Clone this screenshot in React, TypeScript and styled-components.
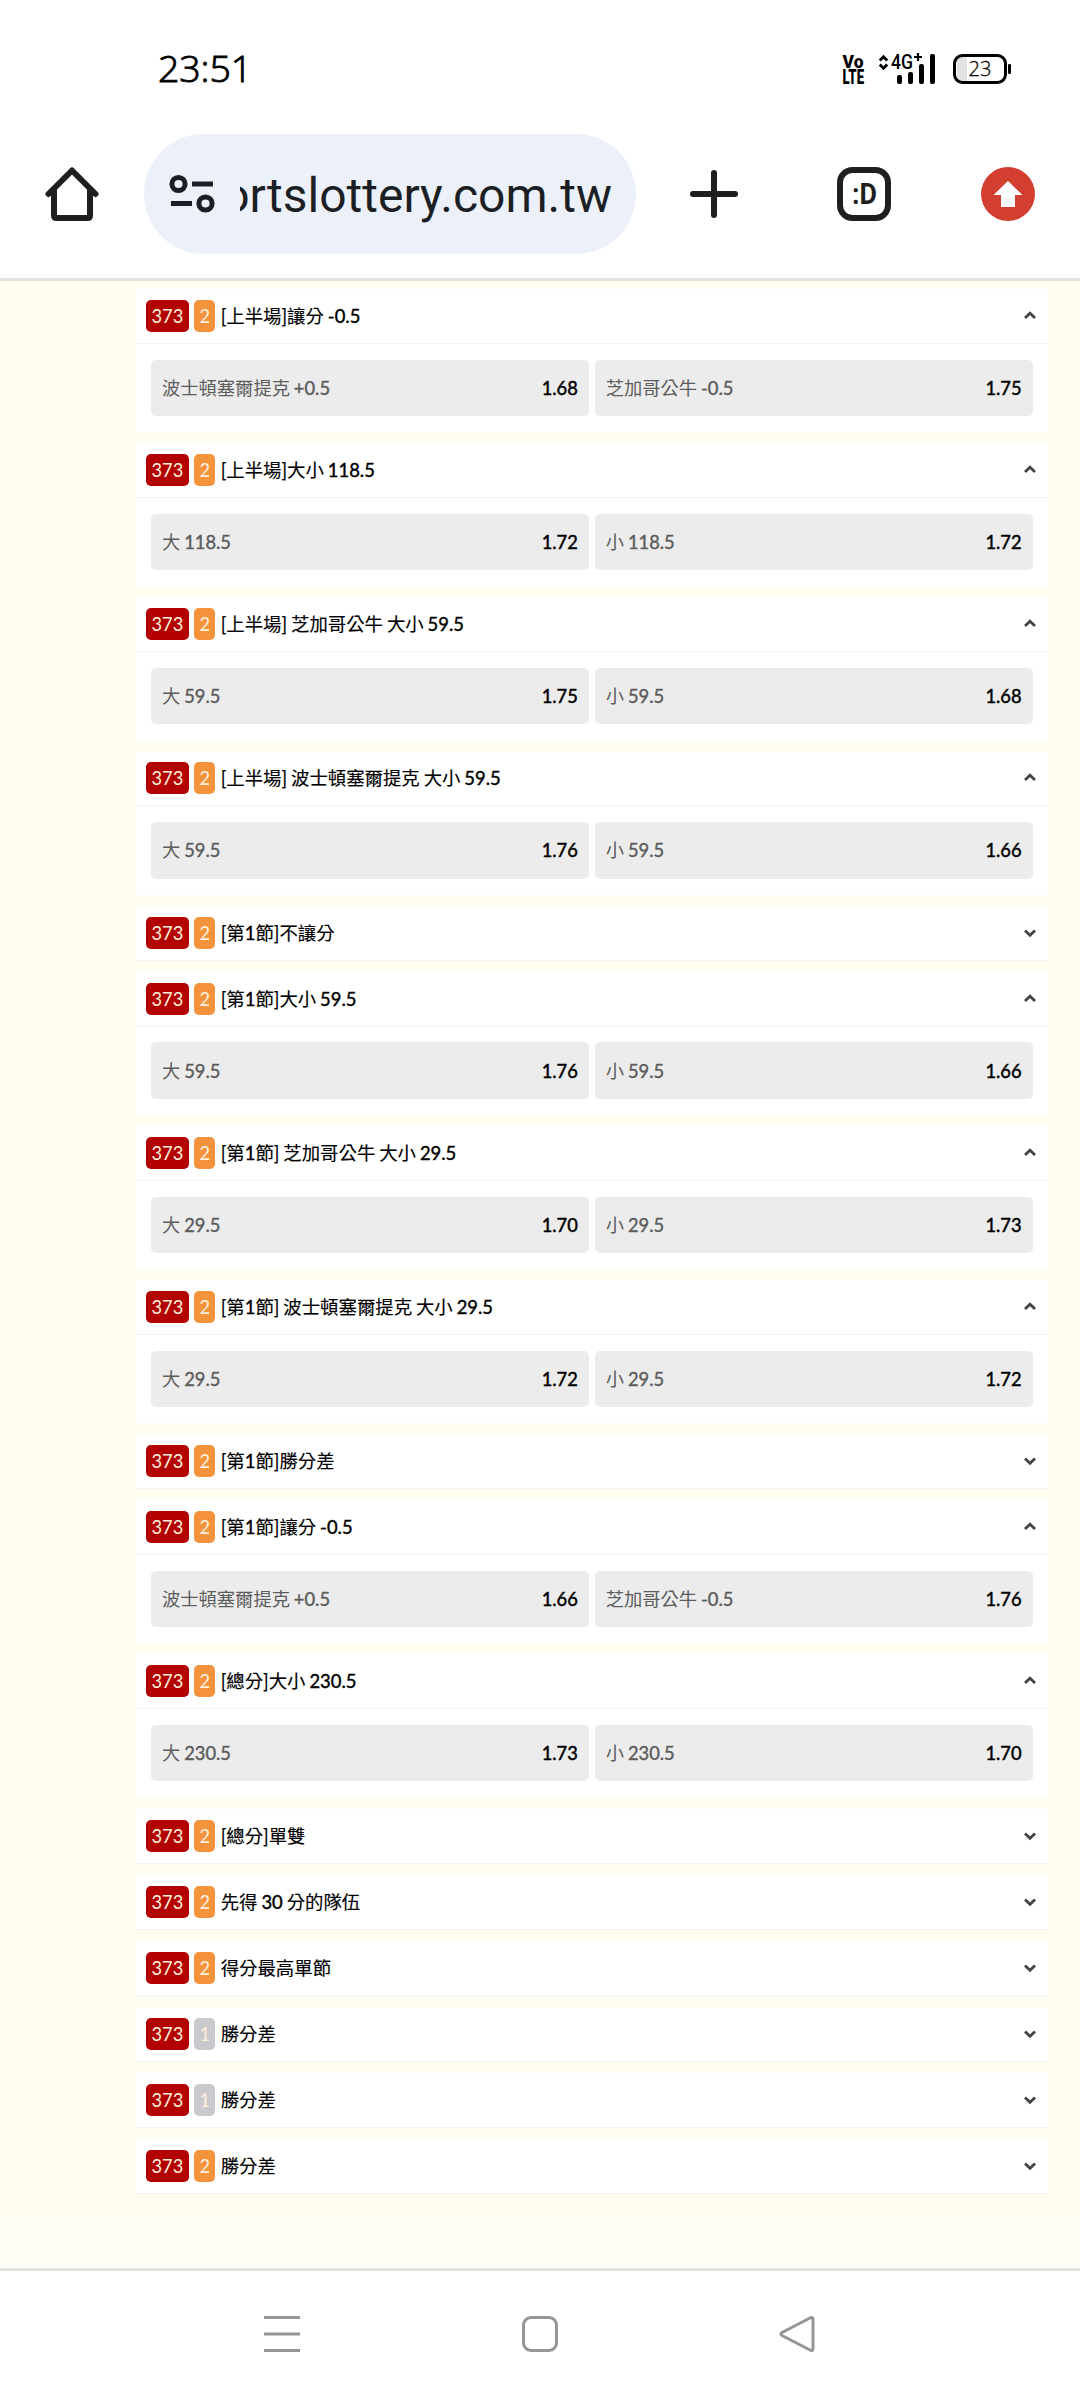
import React from "react";
import styled, { createGlobalStyle } from "styled-components";

const Global = createGlobalStyle`
  * { box-sizing: border-box; }
  html, body { margin: 0; padding: 0; background: #fff; }
`;

const Screen = styled.div`
  width: 1080px;
  height: 2400px;
  display: flex;
  flex-direction: column;
  background: #fff;
  overflow: hidden;
  font-family: Lato, "Noto Sans CJK TC", sans-serif;
`;

const StatusBar = styled.div`
  height: 134px;
  display: flex;
  align-items: flex-start;
  justify-content: space-between;
  padding: 41px 68px 0 158px;
`;

const Clock = styled.div`
  font: 300 37.5px/54px "Open Sans", "Noto Sans", sans-serif;
  letter-spacing: -0.1px;
  color: #000;
  -webkit-text-stroke: 0.9px #000;
`;

const StatusIcons = styled.div`
  display: flex;
  padding-top: 9px;
`;

const Toolbar = styled.div`
  height: 147px;
  flex: none;
  display: flex;
  align-items: flex-start;
  padding-left: 45px;
  border-bottom: 3px solid #e1e2dc;
`;

const ToolIcon = styled.div<{ $gap: number }>`
  flex: none;
  width: 54px;
  height: 120px;
  margin-left: ${(p) => p.$gap}px;
  display: flex;
  align-items: center;
  justify-content: center;
`;

const AddressBar = styled.div`
  flex: none;
  width: 492px;
  height: 120px;
  margin-left: 45px;
  border-radius: 60px;
  background: #ecf0f9;
  display: flex;
  align-items: center;
  padding: 0 24px 0 25px;
`;

const Url = styled.div`
  width: 372px;
  margin-left: 25px;
  overflow: hidden;
  display: flex;
  justify-content: flex-end;
  white-space: nowrap;
  font: 400 48px/64px Roboto, sans-serif;
  color: #1b1f23;
  padding-top: 4px;
`;

const Page = styled.main`
  flex: none;
  height: 1935px;
  padding: 8px 32px 0 136px;
  background: #fffdf0;
  display: flex;
  flex-direction: column;
  gap: 11.07px;
`;

const Footer = styled.div`
  flex: none;
  height: 55px;
  background: #fffdf5;
  border-bottom: 3px solid #e1e2dc;
`;

const Card = styled.section`
  flex: none;
  background: #fff;
`;

const CardHeader = styled.header`
  height: 55px;
  display: flex;
  align-items: center;
  padding: 0 12px 0 10px;
  border-bottom: 1.5px solid #f3f4f5;
`;

const Badge = styled.span<{ $color: string; $width: number }>`
  width: ${(p) => p.$width}px;
  height: 32px;
  margin-right: 5.5px;
  border-radius: 5px;
  background: ${(p) => p.$color};
  color: #fff0dc;
  font-size: 18.3px;
  line-height: 32px;
  text-align: center;
`;

const Title = styled.h2`
  flex: 1;
  margin: 0;
  font-size: 18.4px;
  line-height: 32px;
  font-weight: 400;
  color: #000;
  word-spacing: -0.8px;
  -webkit-text-stroke: 0.15px #000;
`;

const Figures = styled.span`
  -webkit-text-stroke: 0.4px currentColor;
`;

const Options = styled.div`
  height: 88.1px;
  display: grid;
  grid-template-columns: 1fr 1fr;
  gap: 6px;
  padding: 15.7px 15.5px 16px 15px;
`;

const Option = styled.div`
  display: flex;
  align-items: center;
  justify-content: space-between;
  padding: 0 11px;
  border-radius: 5px;
  background: #ececec;
  font-size: 18.3px;
  line-height: 32px;
`;

const OptionName = styled.span`
  color: #5c5c5c;
  word-spacing: -0.8px;
`;

const Odds = styled.span`
  color: #000;
  -webkit-text-stroke: 0.45px #000;
`;

const NavBar = styled.nav`
  flex: none;
  height: 129px;
  display: flex;
  justify-content: center;
  padding-top: 42px;
  gap: 216px;
`;

type Pick = [string, string];
interface Market {
  title: string;
  legs?: 1 | 2;
  picks?: [Pick, Pick];
}

const overUnder = (line: string, over: string, under: string): [Pick, Pick] => [
  [`大 ${line}`, over],
  [`小 ${line}`, under],
];

const handicap = (home: string, away: string): [Pick, Pick] => [
  ["波士頓塞爾提克 +0.5", home],
  ["芝加哥公牛 -0.5", away],
];

const markets: Market[] = [
  { title: "[上半場]讓分 -0.5", picks: handicap("1.68", "1.75") },
  { title: "[上半場]大小 118.5", picks: overUnder("118.5", "1.72", "1.72") },
  { title: "[上半場] 芝加哥公牛 大小 59.5", picks: overUnder("59.5", "1.75", "1.68") },
  { title: "[上半場] 波士頓塞爾提克 大小 59.5", picks: overUnder("59.5", "1.76", "1.66") },
  { title: "[第1節]不讓分" },
  { title: "[第1節]大小 59.5", picks: overUnder("59.5", "1.76", "1.66") },
  { title: "[第1節] 芝加哥公牛 大小 29.5", picks: overUnder("29.5", "1.70", "1.73") },
  { title: "[第1節] 波士頓塞爾提克 大小 29.5", picks: overUnder("29.5", "1.72", "1.72") },
  { title: "[第1節]勝分差" },
  { title: "[第1節]讓分 -0.5", picks: handicap("1.66", "1.76") },
  { title: "[總分]大小 230.5", picks: overUnder("230.5", "1.73", "1.70") },
  { title: "[總分]單雙" },
  { title: "先得 30 分的隊伍" },
  { title: "得分最高單節" },
  { title: "勝分差", legs: 1 },
  { title: "勝分差", legs: 1 },
  { title: "勝分差" },
];

// Figures are set a little stronger than the Chinese text around them.
const Label = ({ text }: { text: string }) => (
  <>
    {text.split(/([-+]?[\d.]+)/).map((part, i) =>
      i % 2 ? <Figures key={i}>{part}</Figures> : part
    )}
  </>
);

function Chevron({ open }: { open: boolean }) {
  return (
    <svg width="12" height="10" viewBox="0 0 12 10" fill="none" stroke="#444" strokeWidth="2.8">
      <path d={open ? "M1 7.100 6 2.300l5 4.800" : "M1 2.400 6 7.200l5-4.800"} />
    </svg>
  );
}

function MarketCard({ title, legs = 2, picks }: Market) {
  return (
    <Card>
      <CardHeader>
        <Badge $color="#b30000" $width={42.7}>373</Badge>
        <Badge $color={legs === 2 ? "#f4933c" : "#c8c8cd"} $width={21}>{legs}</Badge>
        <Title><Label text={title} /></Title>
        <Chevron open={!!picks} />
      </CardHeader>
      {picks && (
        <Options>
          {picks.map(([name, odds]) => (
            <Option key={name}>
              <OptionName><Label text={name} /></OptionName>
              <Odds>{odds}</Odds>
            </Option>
          ))}
        </Options>
      )}
    </Card>
  );
}

const StatusGlyphs = () => (
  <svg width="172" height="46" viewBox="840 50 172 46" fill="#000">
    <g fontFamily="Roboto" fontWeight="900" fontSize="19">
      <text x="842.5" y="68" textLength="21" lengthAdjust="spacingAndGlyphs">Vo</text>
      <text x="842.5" y="84" fontSize="20" textLength="21.5" lengthAdjust="spacingAndGlyphs">LTE</text>
    </g>
    <path d="M879.8 60.5l3.7-3.800 3.700 3.800M879.800 64.500l3.700 3.800 3.700-3.800" fill="none" stroke="#000" strokeWidth="2.800" />
    <text x="891" y="69" fontFamily="Roboto" fontWeight="500" fontSize="20" textLength="22" lengthAdjust="spacingAndGlyphs">4G</text>
    <path d="M914 57h8M918 53v8" stroke="#000" strokeWidth="2.200" />
    <rect x="897" y="75" width="5" height="9" rx="2" />
    <rect x="908" y="72" width="5" height="12" rx="2" />
    <rect x="919" y="64" width="5" height="20" rx="2" />
    <rect x="930" y="54" width="5" height="30" rx="2" />
    <path d="M962 57h5v24h-5q-5 0-5-5V62q0-5 5-5z" fill="#e2e2e2" />
    <rect x="954.500" y="55.500" width="51" height="27" rx="8" fill="none" stroke="#000" strokeWidth="3" />
    <rect x="1008" y="64" width="3" height="10" rx="1.200" />
    <text x="968.500" y="76" fontFamily="Open Sans" fontWeight="300" fontSize="21" stroke="#000" strokeWidth="0.300" textLength="23" lengthAdjust="spacingAndGlyphs">23</text>
  </svg>
);

const HomeIcon = () => (
  <svg width="54" height="54" viewBox="0 0 54 54" fill="none" stroke="#1f1f1f" strokeWidth="6" strokeLinecap="round" strokeLinejoin="round">
    <path d="M3.5 27 27 3.5 50.5 27M9 23v25.5q0 2.500 2.500 2.500h31q2.500 0 2.500-2.500V23" />
  </svg>
);

const TuneIcon = () => (
  <svg width="46" height="40" viewBox="0 0 46 40" fill="none" stroke="#1b1f23" strokeWidth="5">
    <circle cx="9.500" cy="10" r="6.600" />
    <path d="M23 10h21M2 29.500h21" />
    <circle cx="36.500" cy="29.500" r="6.600" />
  </svg>
);

const PlusIcon = () => (
  <svg width="54" height="54" viewBox="0 0 54 54" stroke="#1f1f1f" strokeWidth="6" strokeLinecap="round">
    <path d="M6 27h42M27 6v42" />
  </svg>
);

const TabsIcon = () => (
  <svg width="54" height="54" viewBox="0 0 54 54">
    <rect x="3" y="3" width="48" height="48" rx="12.500" fill="none" stroke="#1f1f1f" strokeWidth="6" />
    <text x="15" y="37" fontFamily="Roboto" fontWeight="700" fontSize="29" fill="#1f1f1f" textLength="25" lengthAdjust="spacingAndGlyphs">:D</text>
  </svg>
);

const UpdateIcon = () => (
  <svg width="54" height="54" viewBox="0 0 54 54">
    <circle cx="27" cy="27" r="27" fill="#d23f31" />
    <path d="M27 14 41.500 28H34v12H20V28h-7.500z" fill="#fff" />
  </svg>
);

export default function App() {
  return (
    <Screen>
      <Global />
      <StatusBar>
        <Clock>23:51</Clock>
        <StatusIcons><StatusGlyphs /></StatusIcons>
      </StatusBar>
      <Toolbar>
        <ToolIcon $gap={0}><HomeIcon /></ToolIcon>
        <AddressBar>
          <TuneIcon />
          <Url>sportslottery.com.tw</Url>
        </AddressBar>
        <ToolIcon $gap={51}><PlusIcon /></ToolIcon>
        <ToolIcon $gap={96}><TabsIcon /></ToolIcon>
        <ToolIcon $gap={90}><UpdateIcon /></ToolIcon>
      </Toolbar>
      <Page>
        {markets.map((m, i) => <MarketCard key={i} {...m} />)}
      </Page>
      <Footer />
      <NavBar>
        <svg width="42" height="42" viewBox="0 0 42 42" stroke="#959595" strokeWidth="3">
          <path d="M3 4.500h36M3 21h36M3 37.500h36" />
        </svg>
        <svg width="42" height="42" viewBox="0 0 42 42" fill="none" stroke="#959595" strokeWidth="3">
          <rect x="4.500" y="4.500" width="33" height="33" rx="7.500" />
        </svg>
        <svg width="42" height="42" viewBox="0 0 42 42" fill="none" stroke="#959595" strokeWidth="3" strokeLinejoin="round">
          <path d="M33 5q3-1.500 3 1.500v29q0 3-3 1.500L5 22.500q-2-1.500 0-3z" />
        </svg>
      </NavBar>
    </Screen>
  );
}
